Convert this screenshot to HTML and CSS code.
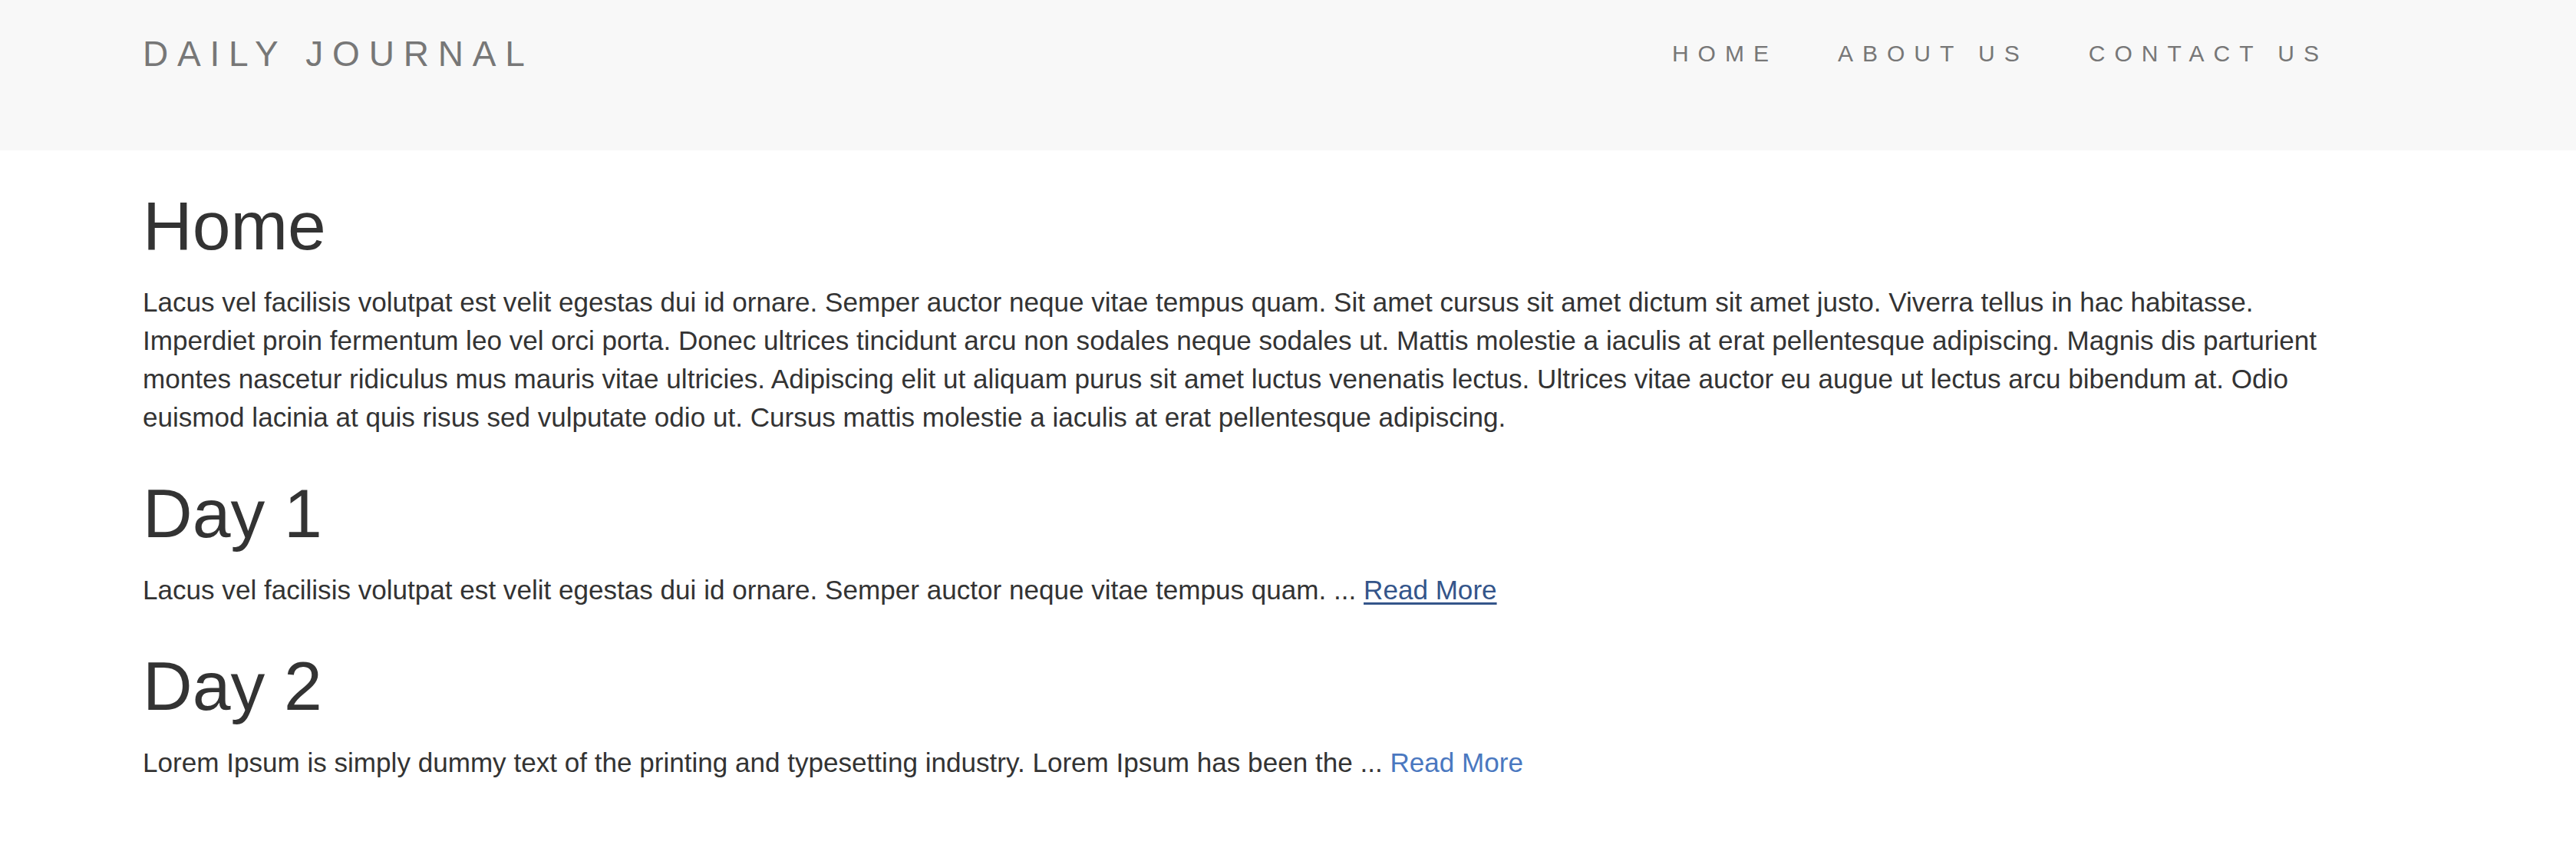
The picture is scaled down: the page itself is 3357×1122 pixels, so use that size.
FILE: index.html
```html
<!DOCTYPE html>
<html lang="en">
<head>
<meta charset="utf-8">
<title>Daily Journal</title>
<link rel="stylesheet" href="styles.css">
</head>
<body>
<header class="site-header">
  <div class="container header-row">
    <a class="brand" href="#">DAILY JOURNAL</a>
    <nav class="nav">
      <a class="nav-link" href="#">HOME</a>
      <a class="nav-link" href="#">ABOUT US</a>
      <a class="nav-link" href="#">CONTACT US</a>
    </nav>
  </div>
</header>
<main class="container content">
  <h1 class="title title-first">Home</h1>
  <p class="text">Lacus vel facilisis volutpat est velit egestas dui id ornare. Semper auctor neque vitae tempus quam. Sit amet cursus sit amet dictum sit amet justo. Viverra tellus in hac habitasse.<br>Imperdiet proin fermentum leo vel orci porta. Donec ultrices tincidunt arcu non sodales neque sodales ut. Mattis molestie a iaculis at erat pellentesque adipiscing. Magnis dis parturient montes nascetur ridiculus mus mauris vitae ultricies. Adipiscing elit ut aliquam purus sit amet luctus venenatis lectus. Ultrices vitae auctor eu augue ut lectus arcu bibendum at. Odio euismod lacinia at quis risus sed vulputate odio ut. Cursus mattis molestie a iaculis at erat pellentesque adipiscing.</p>

  <h1 class="title">Day 1</h1>
  <p class="text">Lacus vel facilisis volutpat est velit egestas dui id ornare. Semper auctor neque vitae tempus quam. ... <a class="more more-active" href="#">Read More</a></p>

  <h1 class="title">Day 2</h1>
  <p class="text">Lorem Ipsum is simply dummy text of the printing and typesetting industry. Lorem Ipsum has been the ... <a class="more" href="#">Read More</a></p>
</main>
</body>
</html>
```

FILE: styles.css
```css
html, body {
  margin: 0;
  padding: 0;
  background: #ffffff;
}

body {
  font-family: "Liberation Sans", Arial, Helvetica, sans-serif;
  color: #333333;
}

.container {
  margin-left: 186px;
  width: 2848px;
}

.site-header {
  background: #f8f8f8;
  height: 196px;
  box-sizing: border-box;
  padding-top: 40px;
}

.header-row {
  display: flex;
  align-items: flex-start;
  justify-content: space-between;
}

.brand {
  font-size: 46px;
  line-height: 60px;
  letter-spacing: 11.8px;
  color: #777777;
  text-decoration: none;
}

.nav {
  display: flex;
  gap: 78px;
}

.nav-link {
  font-size: 30px;
  line-height: 60px;
  letter-spacing: 12px;
  color: #777777;
  text-decoration: none;
}

.content {
  padding-bottom: 40px;
}

.title {
  font-size: 89.5px;
  font-weight: 400;
  line-height: 101px;
  margin: 50px 0 24px;
  color: #333333;
}

.title-first {
  margin-top: 48px;
}

.text {
  font-size: 35.1px;
  line-height: 50px;
  margin: 0;
  color: #333333;
}

.more {
  color: #4a78c0;
  text-decoration: none;
}

.more-active {
  color: #34558a;
  text-decoration: underline;
  text-decoration-thickness: 3px;
  text-underline-offset: 4px;
}
```
